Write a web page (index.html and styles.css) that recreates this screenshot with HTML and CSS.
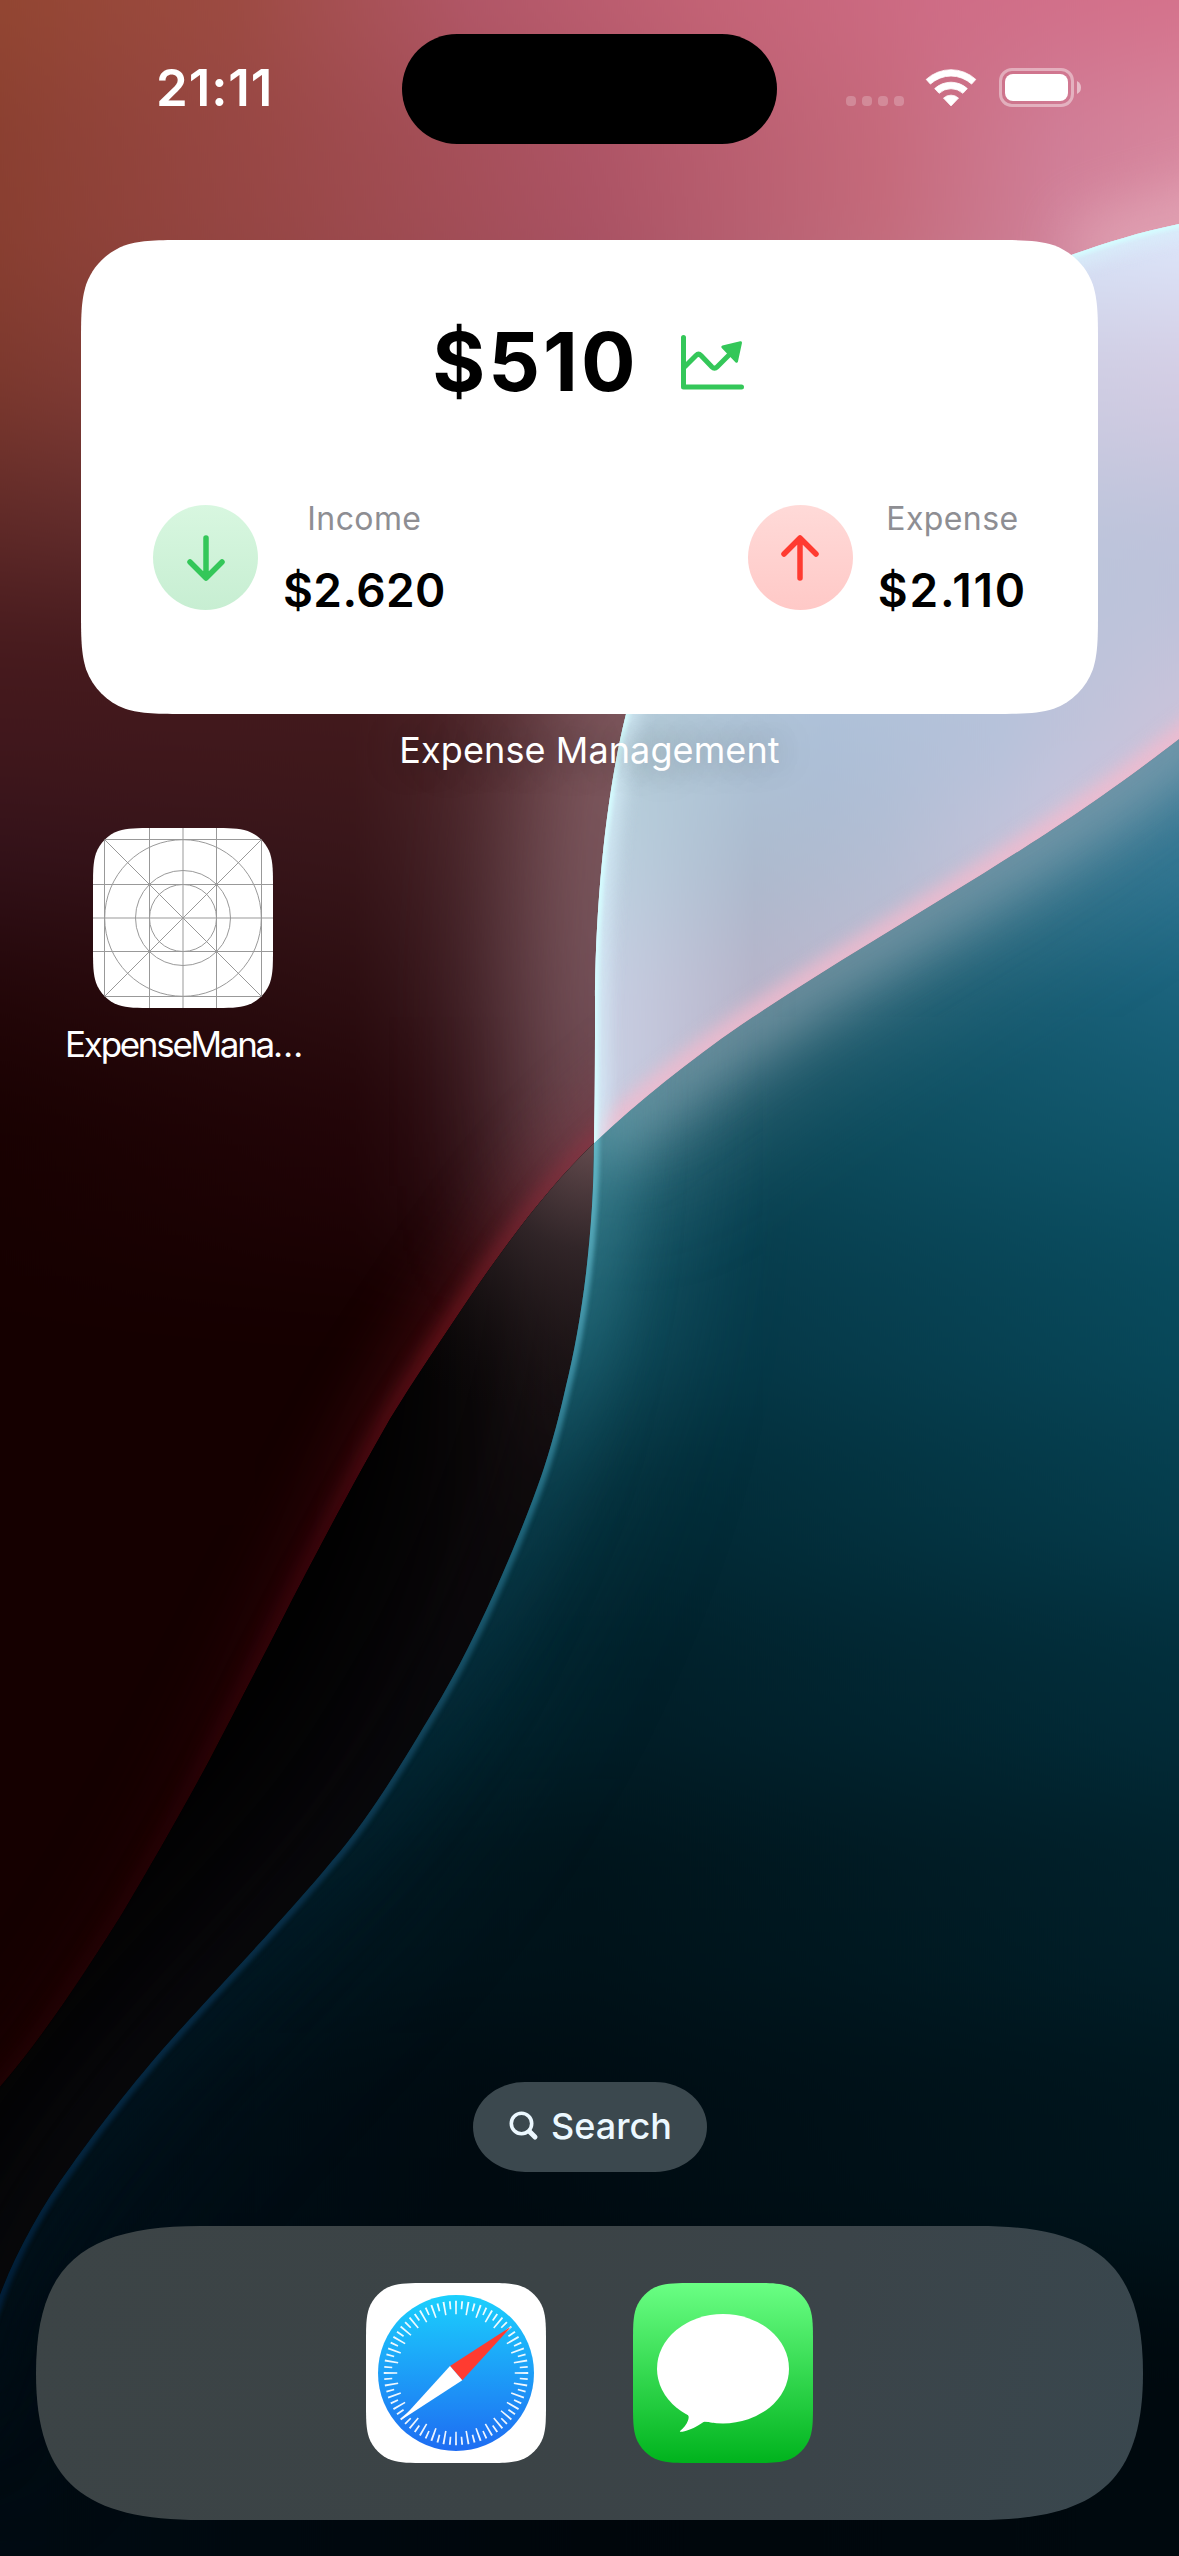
FILE: index.html
```html
<!DOCTYPE html>
<html lang="en">
<head>
<meta charset="utf-8">
<title>Home Screen</title>
<link rel="stylesheet" href="styles.css">
</head>
<body>
<svg class="wallpaper" viewBox="0 0 1179 2556" aria-hidden="true">
  <defs>
    <path id="edge-a" d="M1260,208 L1179,224 C1140,232 1105,243 1074,254 C860,335 670,530 626,714 C607,790 595,900 595,1007 C595,1050 595,1100 594,1141 C594,1240 580,1330 566,1386 C555,1435 545,1468 533,1499 C510,1560 475,1640 441,1698 C410,1750 370,1818 332,1861 C290,1912 228,1977 189,2020 C150,2062 105,2118 71,2166 C40,2208 15,2255 0,2295 L-50,2440"/>
    <path id="edge-b" d="M1260,676 L1179,739 C1100,800 1040,838 984,873 C900,925 815,975 741,1025 C690,1060 640,1100 594,1143 C550,1186 510,1238 468,1300 C442,1339 415,1378 390,1419 C350,1489 310,1565 286,1612 C260,1663 235,1711 209,1761 C182,1811 150,1867 122,1914 C90,1965 45,2035 0,2087 L-60,2155"/>
    <clipPath id="right-of-a"><path d="M1260,208 L1179,224 C1140,232 1105,243 1074,254 C860,335 670,530 626,714 C607,790 595,900 595,1007 C595,1050 595,1100 594,1141 C594,1240 580,1330 566,1386 C555,1435 545,1468 533,1499 C510,1560 475,1640 441,1698 C410,1750 370,1818 332,1861 C290,1912 228,1977 189,2020 C150,2062 105,2118 71,2166 C40,2208 15,2255 0,2295 L-50,2440 V2700 H1260 Z"/></clipPath>
    <clipPath id="left-of-a"><path d="M1260,208 L1179,224 C1140,232 1105,243 1074,254 C860,335 670,530 626,714 C607,790 595,900 595,1007 C595,1050 595,1100 594,1141 C594,1240 580,1330 566,1386 C555,1435 545,1468 533,1499 C510,1560 475,1640 441,1698 C410,1750 370,1818 332,1861 C290,1912 228,1977 189,2020 C150,2062 105,2118 71,2166 C40,2208 15,2255 0,2295 L-50,2440 V-40 H1260 Z"/></clipPath>
    <clipPath id="above-b"><path d="M1260,676 L1179,739 C1100,800 1040,838 984,873 C900,925 815,975 741,1025 C690,1060 640,1100 594,1143 C550,1186 510,1238 468,1300 C442,1339 415,1378 390,1419 C350,1489 310,1565 286,1612 C260,1663 235,1711 209,1761 C182,1811 150,1867 122,1914 C90,1965 45,2035 0,2087 L-60,2155 V-40 H1260 Z"/></clipPath>
    <clipPath id="below-b"><path d="M1260,676 L1179,739 C1100,800 1040,838 984,873 C900,925 815,975 741,1025 C690,1060 640,1100 594,1143 C550,1186 510,1238 468,1300 C442,1339 415,1378 390,1419 C350,1489 310,1565 286,1612 C260,1663 235,1711 209,1761 C182,1811 150,1867 122,1914 C90,1965 45,2035 0,2087 L-60,2155 V2700 H1260 Z"/></clipPath>
    <filter id="soften" color-interpolation-filters="sRGB" filterUnits="userSpaceOnUse" x="-300" y="-300" width="1800" height="3200"><feGaussianBlur stdDeviation="0 60"/></filter>
    <filter id="b2" color-interpolation-filters="sRGB" filterUnits="userSpaceOnUse" x="-100" y="0" width="1400" height="2600"><feGaussianBlur stdDeviation="2"/></filter>
    <filter id="b8" color-interpolation-filters="sRGB" filterUnits="userSpaceOnUse" x="-100" y="0" width="1400" height="2600"><feGaussianBlur stdDeviation="9"/></filter>
    <filter id="b30" color-interpolation-filters="sRGB" filterUnits="userSpaceOnUse" x="-200" y="0" width="1600" height="2600"><feGaussianBlur stdDeviation="30"/></filter>
    <filter id="b70" color-interpolation-filters="sRGB" filterUnits="userSpaceOnUse" x="-300" y="0" width="1800" height="2700"><feGaussianBlur stdDeviation="66"/></filter>

    <linearGradient id="r0"><stop offset="0" stop-color="#934632"/><stop offset=".2" stop-color="#9d4b42"/><stop offset=".4" stop-color="#b25768"/><stop offset=".6" stop-color="#c46376"/><stop offset=".8" stop-color="#cf6c86"/><stop offset="1" stop-color="#d4708a"/></linearGradient>
    <linearGradient id="r1"><stop offset="0" stop-color="#8a3f31"/><stop offset=".25" stop-color="#9a4848"/><stop offset=".5" stop-color="#ac5364"/><stop offset=".75" stop-color="#c56a7b"/><stop offset=".9" stop-color="#d07f98"/><stop offset="1" stop-color="#d7889f"/></linearGradient>
    <linearGradient id="r2"><stop offset="0" stop-color="#7d392e"/><stop offset=".5" stop-color="#95495a"/><stop offset="1" stop-color="#dda5b5"/></linearGradient>
    <linearGradient id="r3"><stop offset="0" stop-color="#602a28"/><stop offset=".5" stop-color="#6e3b42"/><stop offset="1" stop-color="#a07078"/></linearGradient>
    <linearGradient id="r4"><stop offset="0" stop-color="#43181c"/><stop offset=".3" stop-color="#42191c"/><stop offset=".55" stop-color="#603b40"/></linearGradient>
    <linearGradient id="r5"><stop offset="0" stop-color="#33121a"/><stop offset=".3" stop-color="#38161a"/><stop offset=".5" stop-color="#523035"/></linearGradient>
    <linearGradient id="r6"><stop offset="0" stop-color="#230608"/><stop offset=".3" stop-color="#2d0e11"/><stop offset=".5" stop-color="#4a2930"/></linearGradient>
    <linearGradient id="r7"><stop offset="0" stop-color="#180101"/><stop offset=".3" stop-color="#210407"/><stop offset=".5" stop-color="#3a1920"/></linearGradient>

    <linearGradient id="t0"><stop offset=".5" stop-color="#2f6f80"/><stop offset=".8" stop-color="#1f667d"/><stop offset="1" stop-color="#2b7390"/></linearGradient>
    <linearGradient id="t1"><stop offset=".5" stop-color="#1f5e6e"/><stop offset=".7" stop-color="#125365"/><stop offset="1" stop-color="#186079"/></linearGradient>
    <linearGradient id="t2"><stop offset=".5" stop-color="#0f4e5f"/><stop offset=".65" stop-color="#0b4757"/><stop offset="1" stop-color="#0f566b"/></linearGradient>
    <linearGradient id="t3"><stop offset=".45" stop-color="#0a4352"/><stop offset=".65" stop-color="#063a4a"/><stop offset="1" stop-color="#08495b"/></linearGradient>
    <linearGradient id="t4"><stop offset=".4" stop-color="#032932"/><stop offset=".6" stop-color="#022c38"/><stop offset="1" stop-color="#053d4d"/></linearGradient>
    <linearGradient id="t5"><stop offset=".35" stop-color="#01222b"/><stop offset=".55" stop-color="#011f29"/><stop offset="1" stop-color="#022d3a"/></linearGradient>
    <linearGradient id="t6"><stop offset=".2" stop-color="#01161e"/><stop offset=".5" stop-color="#00131a"/><stop offset="1" stop-color="#01202a"/></linearGradient>
    <linearGradient id="t7"><stop offset="0" stop-color="#001019"/><stop offset=".4" stop-color="#000a10"/><stop offset="1" stop-color="#00151d"/></linearGradient>
    <linearGradient id="t8"><stop offset="0" stop-color="#000b12"/><stop offset=".5" stop-color="#00060b"/><stop offset="1" stop-color="#00090e"/></linearGradient>

    <linearGradient id="l0"><stop offset=".5" stop-color="#c4dcf0"/><stop offset="1" stop-color="#dde8fc"/></linearGradient>
    <linearGradient id="l1"><stop offset=".5" stop-color="#b8cfe0"/><stop offset="1" stop-color="#d3cbe2"/></linearGradient>
    <linearGradient id="l2"><stop offset=".5" stop-color="#b4ccda"/><stop offset="1" stop-color="#bcc2da"/></linearGradient>
    <linearGradient id="l3"><stop offset=".53" stop-color="#b4ccd8"/><stop offset=".7" stop-color="#abbfd8"/><stop offset=".85" stop-color="#b4c1da"/><stop offset="1" stop-color="#cdc3da"/></linearGradient>
    <linearGradient id="l4"><stop offset=".51" stop-color="#bcd2e0"/><stop offset=".64" stop-color="#abbacd"/><stop offset=".75" stop-color="#b3bdd2"/><stop offset=".9" stop-color="#cfc6dd"/></linearGradient>
    <linearGradient id="l5"><stop offset=".51" stop-color="#c9cfe3"/><stop offset=".64" stop-color="#b9b4ca"/><stop offset=".75" stop-color="#c2bbd2"/></linearGradient>

    <linearGradient id="red-rim" gradientUnits="userSpaceOnUse" x1="0" y1="1140" x2="0" y2="2100"><stop offset="0" stop-color="#8c3545"/><stop offset=".2" stop-color="#76161f"/><stop offset=".4" stop-color="#4a0710"/><stop offset=".7" stop-color="#2c0307"/><stop offset="1" stop-color="#240406"/></linearGradient>
    <linearGradient id="cyan-rim" gradientUnits="userSpaceOnUse" x1="0" y1="1140" x2="0" y2="2300"><stop offset="0" stop-color="#66bccb"/><stop offset=".2" stop-color="#3f91a6"/><stop offset=".33" stop-color="#226a80"/><stop offset=".48" stop-color="#164c63"/><stop offset=".65" stop-color="#0a324c"/><stop offset="1" stop-color="#02213c"/></linearGradient>
    <linearGradient id="cyan-glow" gradientUnits="userSpaceOnUse" x1="0" y1="1140" x2="0" y2="2300"><stop offset="0" stop-color="#58a0ad"/><stop offset=".17" stop-color="#2a7686"/><stop offset=".3" stop-color="#0f4a5b"/><stop offset=".48" stop-color="#062f3e"/><stop offset=".7" stop-color="#011a26"/><stop offset="1" stop-color="#001019"/></linearGradient>
    <linearGradient id="smoke" gradientUnits="userSpaceOnUse" x1="0" y1="1140" x2="0" y2="2300"><stop offset="0" stop-color="#4a3538"/><stop offset=".15" stop-color="#2d2023"/><stop offset=".3" stop-color="#140e11"/><stop offset=".5" stop-color="#0c0a0f"/><stop offset="1" stop-color="#0a0b0f"/></linearGradient>
    <radialGradient id="lens-spill" gradientUnits="userSpaceOnUse" cx="594" cy="1130" r="300"><stop offset="0" stop-color="#6a5053"/><stop offset=".4" stop-color="#33272a" stop-opacity=".85"/><stop offset="1" stop-color="#100a0b" stop-opacity="0"/></radialGradient>
  </defs>

  <g clip-path="url(#above-b)">
    <g filter="url(#soften)">
      <rect x="0" y="-300" width="1179" height="370" fill="url(#r0)"/>
      <rect x="0" y="70" width="1179" height="230" fill="url(#r1)"/>
      <rect x="0" y="300" width="1179" height="150" fill="url(#r2)"/>
      <rect x="0" y="450" width="1179" height="140" fill="url(#r3)"/>
      <rect x="0" y="590" width="1179" height="200" fill="url(#r4)"/>
      <rect x="0" y="790" width="1179" height="130" fill="url(#r5)"/>
      <rect x="0" y="920" width="1179" height="140" fill="url(#r6)"/>
      <rect x="0" y="1060" width="1179" height="190" fill="url(#r7)"/>
      <rect x="0" y="1250" width="1179" height="1300" fill="#150000"/>
    </g>
    <path d="M1260,200 L1179,224 C1140,232 1105,243 1074,254" fill="none" stroke="#f0c4cf" stroke-width="60" opacity=".45" filter="url(#b30)"/>
    <path d="M660,600 L626,714 C607,790 595,900 595,1007 V1230" fill="none" stroke="#b78f97" stroke-width="120" opacity=".56" filter="url(#b70)"/>
    <use href="#edge-b" fill="none" stroke="url(#red-rim)" stroke-width="70" opacity=".35" filter="url(#b30)"/>
    <use href="#edge-b" fill="none" stroke="url(#red-rim)" stroke-width="18" opacity=".8" filter="url(#b8)"/>
  </g>

  <g clip-path="url(#below-b)">
    <rect width="1179" height="2556" fill="#020202"/>
    <g clip-path="url(#left-of-a)">
      <use href="#edge-a" fill="none" stroke="url(#smoke)" stroke-width="150" opacity=".75" filter="url(#b70)"/>
      <use href="#edge-a" fill="none" stroke="url(#smoke)" stroke-width="60" opacity=".45" filter="url(#b30)"/>
      <rect x="280" y="820" width="400" height="640" fill="url(#lens-spill)"/>
    </g>
  </g>

  <g clip-path="url(#right-of-a)">
    <g clip-path="url(#below-b)">
      <g filter="url(#soften)">
        <rect x="0" y="500" width="1179" height="440" fill="url(#t0)"/>
        <rect x="0" y="940" width="1179" height="140" fill="url(#t1)"/>
        <rect x="0" y="1080" width="1179" height="140" fill="url(#t2)"/>
        <rect x="0" y="1220" width="1179" height="190" fill="url(#t3)"/>
        <rect x="0" y="1410" width="1179" height="180" fill="url(#t4)"/>
        <rect x="0" y="1590" width="1179" height="200" fill="url(#t5)"/>
        <rect x="0" y="1790" width="1179" height="230" fill="url(#t6)"/>
        <rect x="0" y="2020" width="1179" height="260" fill="url(#t7)"/>
        <rect x="0" y="2280" width="1179" height="500" fill="url(#t8)"/>
      </g>
      <path d="M1260,676 L1179,739 C1100,800 1040,838 984,873 C900,925 815,975 741,1025 C690,1060 640,1100 594,1143" fill="none" stroke="#8fa4b2" stroke-width="110" opacity=".4" filter="url(#b70)"/>
      <path d="M1260,676 L1179,739 C1100,800 1040,838 984,873 C900,925 815,975 741,1025 C690,1060 640,1100 594,1143" fill="none" stroke="#9fb0bd" stroke-width="60" opacity=".65" filter="url(#b30)"/>
      <use href="#edge-a" fill="none" stroke="url(#cyan-glow)" stroke-width="110" opacity=".5" filter="url(#b70)"/>
      <use href="#edge-a" fill="none" stroke="url(#cyan-glow)" stroke-width="56" opacity=".55" filter="url(#b30)"/>
      <use href="#edge-a" fill="none" stroke="url(#cyan-rim)" stroke-width="11" opacity=".9" filter="url(#b2)"/>
    </g>
    <g clip-path="url(#above-b)">
      <g filter="url(#soften)">
        <rect x="0" y="0" width="1179" height="300" fill="url(#l0)"/>
        <rect x="0" y="300" width="1179" height="170" fill="url(#l1)"/>
        <rect x="0" y="470" width="1179" height="200" fill="url(#l2)"/>
        <rect x="0" y="670" width="1179" height="130" fill="url(#l3)"/>
        <rect x="0" y="800" width="1179" height="130" fill="url(#l4)"/>
        <rect x="0" y="930" width="1179" height="500" fill="url(#l5)"/>
      </g>
      <use href="#edge-b" fill="none" stroke="#f4bacd" stroke-width="24" opacity=".85" filter="url(#b8)"/>
      <use href="#edge-a" fill="none" stroke="#d8f0fb" stroke-width="24" opacity=".8" filter="url(#b8)"/>
      <use href="#edge-a" fill="none" stroke="#d4fdff" stroke-width="7" filter="url(#b2)"/>
    </g>
  </g>
</svg>

<main class="screen">
  <header class="status">
    <time class="clock">21:11</time>
    <div class="island"></div>
    <div class="indicators">
      <svg class="signal" viewBox="0 0 58 10"><rect width="10" height="10" rx="4"/><rect x="16" width="10" height="10" rx="4"/><rect x="32" width="10" height="10" rx="4"/><rect x="48" width="10" height="10" rx="4"/></svg>
      <svg class="wifi" viewBox="0 0 52 38"><g transform="translate(26 37.3)" fill="#fff" stroke="#fff" stroke-width=".8" stroke-linejoin="round"><path d="M-24.8,-26.9 A36.6,36.6 0 0 1 24.8,-26.9 L20.6,-22.2 A30.4,30.4 0 0 0 -20.6,-22.2Z"/><path d="M-16.3,-17.7 A24,24 0 0 1 16.3,-17.7 L11.9,-13 A17.7,17.7 0 0 0 -11.9,-13Z"/><path d="M-7.5,-8.2 A11,11 0 0 1 7.5,-8.2 L0,-.4Z"/></g></svg>
      <svg class="battery" viewBox="0 0 83 40"><rect x="1.5" y="1.5" width="72" height="36" rx="11.5" fill="none" stroke="#fff" stroke-opacity=".42" stroke-width="3"/><rect x="6" y="6" width="63" height="27" rx="8" fill="#fff"/><path d="M78,13 Q82,15 82,19.5 Q82,24 78,26Z" fill="#fff" fill-opacity=".5"/></svg>
    </div>
  </header>

  <section class="widget">
    <div class="balance">
      <span class="total">$510</span>
      <svg class="trend" viewBox="0 0 64 56" fill="none" stroke="#34c759" stroke-width="5" stroke-linecap="round" stroke-linejoin="round"><path d="M2.5,2.5 V52 H60.5"/><path d="M4,31.5 L15,20.5 Q17.5,18 20,20.5 L31,32 Q33.5,34.5 36,32 L52,16"/><path d="M59.5,7.8 L41.8,12 L55.5,26.2Z" fill="#34c759" stroke-width="3"/></svg>
    </div>
    <div class="flows">
      <div class="flow">
        <span class="badge badge-income"><svg viewBox="0 0 40 46"><path d="M20,3 V42 M4,27 L20,43 L36,27"/></svg></span>
        <div class="figures"><span class="caption">Income</span><span class="amount">$2.620</span></div>
      </div>
      <div class="flow">
        <span class="badge badge-expense"><svg viewBox="0 0 40 46"><path d="M20,43 V4 M4,19 L20,3 L36,19"/></svg></span>
        <div class="figures"><span class="caption">Expense</span><span class="amount amount-expense">$2.110</span></div>
      </div>
    </div>
  </section>
  <p class="widget-name">Expense Management</p>

  <div class="app">
    <svg class="icon" viewBox="0 0 180 180"><rect width="180" height="180" fill="#fff"/><g fill="none" stroke="#999" stroke-width="1"><path stroke="#ccc" stroke-width="2" d="M0,90 H180 M90,0 V180"/><path d="M0,11.5 H180 M0,56.5 H180 M0,123.5 H180 M0,168.5 H180 M11.5,0 V180 M56.5,0 V180 M123.5,0 V180 M168.5,0 V180 M11.5,11.5 L168.5,168.5 M168.5,11.5 L11.5,168.5"/><circle cx="90" cy="90" r="33.5"/><circle cx="90" cy="90" r="47.5"/><circle cx="90" cy="90" r="78.3"/></g></svg>
    <span class="app-name">ExpenseMana…</span>
  </div>

  <div class="search">
    <svg viewBox="0 0 30 30" fill="none" stroke="#ecf8ff" stroke-linecap="round"><circle cx="12.5" cy="12.5" r="10.2" stroke-width="3.6"/><path d="M20.5,20.5 L26,26" stroke-width="5"/></svg>
    <span>Search</span>
  </div>

  <nav class="dock">
    <svg class="icon" viewBox="0 0 180 180">
      <defs><linearGradient id="sky" x2="0" y2="1"><stop stop-color="#1bd0fd"/><stop offset="1" stop-color="#1e6cf2"/></linearGradient></defs>
      <rect width="180" height="180" fill="#fff"/><circle cx="90" cy="90" r="78" fill="url(#sky)"/>
      <g fill="none" stroke="#fff" stroke-opacity=".92"><circle cx="90" cy="90" r="65.5" stroke-width="13.5" pathLength="360" stroke-dasharray="1.5 8.5" stroke-dashoffset=".75"/><circle cx="90" cy="90" r="68" stroke-width="8" pathLength="360" stroke-dasharray="1.5 8.5" stroke-dashoffset="5.75"/></g>
      <path d="M145.3,43.5 L84,83 L96.3,97.3Z" fill="#ff3b30"/><path d="M34.7,137.3 L84,83 L96.3,97.3Z" fill="#fff"/>
    </svg>
    <svg class="icon" viewBox="0 0 180 180">
      <defs><linearGradient id="mint" x2="0" y2="1"><stop stop-color="#6aff84"/><stop offset="1" stop-color="#00b31d"/></linearGradient></defs>
      <rect width="180" height="180" fill="url(#mint)"/><ellipse cx="90" cy="85.7" rx="66" ry="54.7" fill="#fff"/><path d="M50,128 C56,132 56.5,133 55,137.5 C53.5,142 50.5,145 47,148 C46.5,149 48,149 49.5,148.7 C58,147 64,143.5 69,140 C71,138.5 72,138.5 80,139.6 L85,125Z" fill="#fff"/>
    </svg>
  </nav>
</main>
</body>
</html>
```
FILE: styles.css
```css
* {
  box-sizing: border-box;
}

body {
  margin: 0;
  background: #000;
  font-family: Inter, "Liberation Sans", sans-serif;
  color: #fff;
}

svg {
  display: block;
}

.wallpaper {
  position: absolute;
  inset: 0;
  width: 1179px;
  height: 2556px;
}

.screen {
  position: relative;
  width: 1179px;
  height: 2556px;
  padding: 34px 36px 36px;
  display: flex;
  flex-direction: column;
  align-items: center;
  overflow: hidden;
}

.status {
  align-self: stretch;
  height: 110px;
  display: grid;
  grid-template-columns: 1fr 375px 1fr;
}

.clock {
  align-self: start;
  margin: 23px 0 0 120px;
  font-size: 51px;
  line-height: 62px;
  font-weight: 600;
  letter-spacing: 0.9px;
}

.island {
  background: #000;
  border-radius: 55px;
}

.indicators {
  display: flex;
  align-items: flex-start;
  padding: 34px 0 0 69px;
}

.signal {
  width: 58px;
  height: 10px;
  margin: 28px 21px 0 0;
  fill: rgba(255, 255, 255, 0.22);
}

.wifi {
  width: 52px;
  height: 38px;
  margin: 1px 22px 0 0;
}

.battery {
  width: 83px;
  height: 40px;
}

.widget {
  width: 1017px;
  height: 474px;
  margin-top: 96px;
  padding: 73px 71px 0 72px;
  background: #fff;
  color: #000;
  clip-path: path("M107,0 H910 C940.8,0 956.2,0 972.8,5.2 C990.9,11.8 1005.2,26.1 1011.8,44.2 C1017,60.8 1017,76.2 1017,107 V367 C1017,397.8 1017,413.2 1011.8,429.8 C1005.2,447.9 990.9,462.2 972.8,468.8 C956.2,474 940.8,474 910,474 H107 C76.2,474 60.8,474 44.2,468.8 C26.1,462.2 11.8,447.9 5.2,429.8 C0,413.2 0,397.8 0,367 V107 C0,76.2 0,60.8 5.2,44.2 C11.8,26.1 26.1,11.8 44.2,5.2 C60.8,0 76.2,0 107,0 Z");
}

.balance {
  display: flex;
  justify-content: center;
  align-items: center;
  gap: 42px;
  height: 98px;
  padding-right: 3px;
}

.total {
  font-size: 81px;
  line-height: 98px;
  font-weight: 700;
  letter-spacing: 3px;
}

.trend {
  width: 64px;
  height: 56px;
  margin-top: 2px;
}

.flows {
  display: flex;
  justify-content: space-between;
  margin-top: 87px;
}

.flow {
  display: flex;
  align-items: center;
  gap: 25px;
}

.badge {
  width: 105px;
  height: 105px;
  margin-bottom: 1px;
  display: grid;
  place-items: center;
  border-radius: 50%;
}

.badge svg {
  width: 40px;
  height: 46px;
  fill: none;
  stroke-width: 5.5;
  stroke-linecap: round;
  stroke-linejoin: round;
}

.badge-income {
  background: linear-gradient(#d8f7e0, #c7eed2);
  stroke: #34c759;
}

.badge-expense {
  background: linear-gradient(#ffdad8, #ffc9c7);
  stroke: #ff3b30;
}

.figures {
  display: flex;
  flex-direction: column;
  align-items: center;
  gap: 22px;
}

.caption {
  font-size: 32px;
  line-height: 42px;
  letter-spacing: 0.4px;
  color: #8e8e93;
}

.amount {
  font-size: 46px;
  line-height: 56px;
  font-weight: 600;
  letter-spacing: 0.4px;
}

.amount-expense {
  letter-spacing: 1.8px;
}

.widget-name {
  margin: 14px 0 0;
  font-size: 36px;
  line-height: 44px;
  letter-spacing: 0.1px;
  text-shadow: 0 0 36px rgba(0, 0, 0, 0.4);
}

.app {
  align-self: flex-start;
  width: 240px;
  margin: 56px 0 0 27px;
  display: flex;
  flex-direction: column;
  align-items: center;
  gap: 14px;
}

.icon {
  width: 180px;
  height: 180px;
  clip-path: path("M61.1,0 H118.9 C136.5,0 145.3,0 154.7,3 C165.1,6.8 173.2,14.9 177,25.3 C180,34.7 180,43.5 180,61.1 V118.9 C180,136.5 180,145.3 177,154.7 C173.2,165.1 165.1,173.2 154.7,177 C145.3,180 136.5,180 118.9,180 H61.1 C43.5,180 34.7,180 25.3,177 C14.9,173.2 6.8,165.1 3,154.7 C0,145.3 0,136.5 0,118.9 V61.1 C0,43.5 0,34.7 3,25.3 C6.8,14.9 14.9,6.8 25.3,3 C34.7,0 43.5,0 61.1,0 Z");
}

.app-name {
  font-size: 35px;
  line-height: 44px;
  letter-spacing: -2.3px;
  white-space: nowrap;
}

.search {
  width: 234px;
  height: 90px;
  margin: auto 0 54px;
  padding: 0 0 2px 2px;
  display: flex;
  align-items: center;
  justify-content: center;
  gap: 12px;
  border-radius: 52px / 45px;
  background: #3b484e;
  color: #ecf8ff;
  font-size: 36px;
  font-weight: 500;
}

.search svg {
  width: 30px;
  height: 30px;
}

.dock {
  width: 1107px;
  height: 294px;
  display: flex;
  align-items: center;
  justify-content: center;
  gap: 87px;
  background: linear-gradient(100deg, #3c4446 0%, #3b4346 45%, #3b4449 70%, #39474e 100%);
  clip-path: path("M165,0 H942 C1057,0 1107,36 1107,147 C1107,258 1057,294 942,294 H165 C50,294 0,258 0,147 C0,36 50,0 165,0 Z");
}
```
